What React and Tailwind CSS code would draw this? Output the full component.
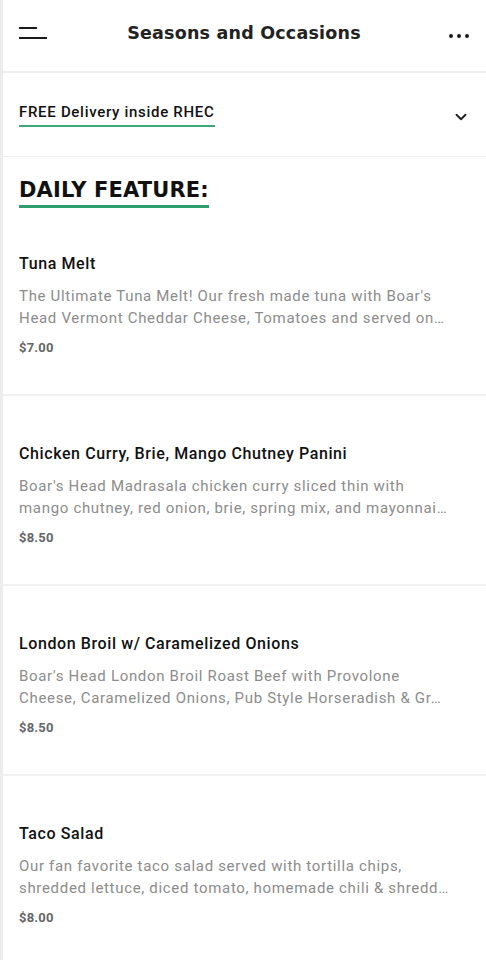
import { ChevronDown } from 'lucide-react';

const items = [
  {
    name: 'Tuna Melt',
    lines: ["The Ultimate Tuna Melt! Our fresh made tuna with Boar's", 'Head Vermont Cheddar Cheese, Tomatoes and served on…'],
    price: '$7.00',
  },
  {
    name: 'Chicken Curry, Brie, Mango Chutney Panini',
    lines: ["Boar's Head Madrasala chicken curry sliced thin with", 'mango chutney, red onion, brie, spring mix, and mayonnai…'],
    price: '$8.50',
  },
  {
    name: 'London Broil w/ Caramelized Onions',
    lines: ["Boar's Head London Broil Roast Beef with Provolone", 'Cheese, Caramelized Onions, Pub Style Horseradish & Gr…'],
    price: '$8.50',
  },
  {
    name: 'Taco Salad',
    lines: ['Our fan favorite taco salad served with tortilla chips,', 'shredded lettuce, diced tomato, homemade chili & shredd…'],
    price: '$8.00',
  },
];

const headingFont = "font-['DejaVu_Sans',sans-serif]";
const bodyFont = "font-['Roboto',sans-serif]";

export default function App() {
  return (
    <div className={`min-h-screen bg-white border-l-[3px] border-[#ececec] ${bodyFont}`}>
      {/* Header */}
      <div className="h-[73px] flex items-center justify-between pl-4 pr-[17px] border-b-2 border-[#eeeeee]">
        <div className="w-8 flex flex-col gap-[8px] mt-[-6px]">
          <span className="block w-[18px] h-[2px] bg-[#1a1a1a]" />
          <span className="block w-[28px] h-[2px] bg-[#1a1a1a]" />
        </div>
        <h1 className={`${headingFont} text-[17.5px] font-bold text-[#222] tracking-[0.2px] pb-[4px]`}>
          Seasons and Occasions
        </h1>
        <div className="w-8 flex justify-end gap-[4px] pt-[1px]">
          <span className="block w-[4px] h-[4px] rounded-full bg-[#1a1a1a]" />
          <span className="block w-[4px] h-[4px] rounded-full bg-[#1a1a1a]" />
          <span className="block w-[4px] h-[4px] rounded-full bg-[#1a1a1a]" />
        </div>
      </div>

      {/* Delivery notice */}
      <div className="h-[84px] flex items-center justify-between pl-4 pr-4 border-b border-[#eeeeee]">
        <span className="text-[15px] font-medium text-[#111] leading-[20px] tracking-[0.7px] pb-[3px] border-b-2 border-[#3ba877]">
          FREE Delivery inside RHEC
        </span>
        <ChevronDown className="w-[18px] h-[18px] text-[#222] mt-[4px]" strokeWidth={2.5} />
      </div>

      {/* Daily feature */}
      <div className="pl-4 pt-[21px]">
        <h2 className={`${headingFont} inline-block text-[21px] font-extrabold text-[#111] leading-[24px] tracking-[0.15px] pb-[3px] border-b-[3px] border-[#2f9e6e]`}>
          DAILY FEATURE:
        </h2>
      </div>

      <div className="pt-[1px]">
        {items.map((item, i) => (
          <div
            key={item.name}
            className={`pl-4 pr-[30px] ${i === 0 ? 'pt-[43px]' : 'pt-[46px]'} pb-[36px] border-b-2 border-[#f2f2f2]`}
          >
            <div className="text-[16px] font-medium text-[#111] leading-[24px] tracking-[0.6px]">{item.name}</div>
            <p className="mt-[9px] text-[15px] text-[#8c8c8c] leading-[22px] tracking-[0.68px]">
              {item.lines.map(line => (
                <span key={line} className="block whitespace-nowrap">{line}</span>
              ))}
            </p>
            <div className="mt-[9px] text-[13px] font-bold text-[#666] leading-[20px] tracking-[0.2px]">{item.price}</div>
          </div>
        ))}
      </div>
    </div>
  );
}
